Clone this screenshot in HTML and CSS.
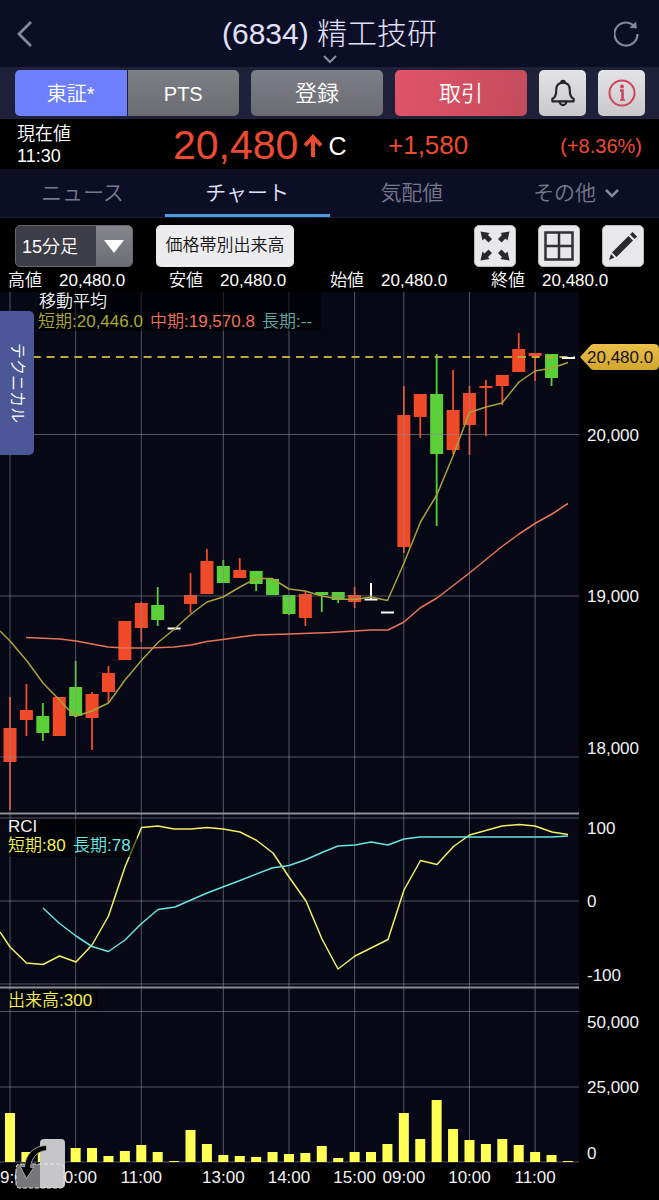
FILE: index.html
```html
<!DOCTYPE html>
<html lang="ja">
<head>
<meta charset="utf-8">
<meta name="viewport" content="width=device-width, initial-scale=1">
<title>(6834) 精工技研</title>
<link rel="stylesheet" href="styles.css">
</head>
<body>
<header class="header">
  <button class="icon-button" type="button" aria-label="戻る">
    <svg width="28" height="28" viewBox="0 0 28 28"><path d="M14 2 2 14l12 12" fill="none" stroke="#85879a" stroke-width="2.800"/></svg>
  </button>
  <div class="title-block">
    <h1 class="title">(6834) 精工技研</h1>
    <svg class="title-chevron" width="16" height="10" viewBox="0 0 16 10"><path d="m2 1 6 6 6-6" fill="none" stroke="#8d8fa3" stroke-width="2"/></svg>
  </div>
  <button class="icon-button" type="button" aria-label="更新">
    <svg width="28" height="28" viewBox="2 0 28 28"><path d="M25.500 14a11.500 11.500 0 1 1-4-8.700" fill="none" stroke="#85879a" stroke-width="2.200"/><path d="m24 1.500.8 7-7.300-.8z" fill="#85879a"/></svg>
  </button>
</header>

<div class="actions">
  <div class="segment">
    <button class="segment-item segment-active" type="button">東証*</button>
    <button class="segment-item" type="button">PTS</button>
  </div>
  <button class="action" type="button">登録</button>
  <button class="action action-trade" type="button">取引</button>
  <button class="square" type="button" aria-label="アラート">
    <svg width="26" height="28" viewBox="0 0 28 30" fill="none" stroke="#242428" stroke-width="2.300" stroke-linejoin="round"><path d="M14 4c-5 0-7.300 3.500-7.300 8 0 6-1.600 8.300-4.200 9.200V24h23v-2.800c-2.600-.9-4.200-3.200-4.200-9.200 0-4.500-2.300-8-7.300-8z"/><path d="M12 4a2 2 0 0 1 4 0M10.500 24.500a3.500 3.500 0 0 0 7 0"/></svg>
  </button>
  <button class="square" type="button" aria-label="情報">
    <svg width="28" height="28" viewBox="0 0 28 28" fill="none" stroke="#cf4359"><circle cx="14" cy="14" r="12.500" stroke-width="2"/><circle cx="14" cy="7.500" r="2" fill="#cf4359" stroke="none"/><path d="M12 11.500h2.500v9.500" stroke-width="2.600"/><path d="M12 21h5" stroke-width="1.600"/></svg>
  </button>
</div>

<section class="quote">
  <div class="quote-label"><span>現在値</span><time>11:30</time></div>
  <div class="quote-price">
    <strong class="price">20,480</strong>
    <svg width="20" height="24" viewBox="0 0 20 24"><path d="M10 23V4M2 11.500 10 3l8 8.500" fill="none" stroke="#ed4a32" stroke-width="4"/></svg>
    <span class="close-mark">C</span>
  </div>
  <div class="quote-change"><span class="change">+1,580</span><span class="rate">(+8.36%)</span></div>
</section>

<nav class="tabs">
  <a class="tab" href="#news">ニュース</a>
  <a class="tab tab-active" href="#chart" aria-current="page">チャート</a>
  <a class="tab" href="#board">気配値</a>
  <a class="tab" href="#other">その他
    <svg width="16" height="10" viewBox="0 0 16 10"><path d="m2 2 6 6 6-6" fill="none" stroke="#85879a" stroke-width="2.500"/></svg>
  </a>
</nav>

<div class="toolbar">
  <div class="select-box">
    <select class="select" aria-label="足種"><option>15分足</option></select>
    <span class="select-arrow"><svg width="20" height="13" viewBox="0 0 20 13"><path d="M0 0h20L10 13z" fill="#fff"/></svg></span>
  </div>
  <button class="volume-button" type="button">価格帯別出来高</button>
  <div class="tools">
    <button class="tool" type="button" aria-label="全画面">
      <svg width="30" height="30" viewBox="0 0 30 30" fill="#28292d"><g id="arrow"><path d="M.5.5 9.500 2 8 4l4 4-3.500 3.500-4-4-2 2z"/></g><use href="#arrow" transform="translate(30 0) scale(-1 1)"/><use href="#arrow" transform="translate(0 30) scale(1 -1)"/><use href="#arrow" transform="translate(30 30) scale(-1 -1)"/></svg>
    </button>
    <button class="tool" type="button" aria-label="分割表示">
      <svg width="30" height="30" viewBox="0 0 30 30" fill="none" stroke="#303136" stroke-width="2.500"><path d="M1.500 1.500h27v27h-27zM15 1.500v27M1.500 15h27"/></svg>
    </button>
    <button class="tool" type="button" aria-label="描画">
      <svg width="30" height="30" viewBox="0 0 30 30" fill="#28292d"><path d="m20.500 5 4.500 4.500L8.500 26 4 21.500zM22 3.500 24.500 1 29 5.500 26.500 8zM3 23l3.500 3.500L1 29z"/></svg>
    </button>
  </div>
</div>

<dl class="ohlc">
  <div class="ohlc-item"><dt>高値</dt><dd>20,480.0</dd></div>
  <div class="ohlc-item"><dt>安値</dt><dd>20,480.0</dd></div>
  <div class="ohlc-item"><dt>始値</dt><dd>20,480.0</dd></div>
  <div class="ohlc-item"><dt>終値</dt><dd>20,480.0</dd></div>
</dl>

<main class="chart-area">
  <svg class="chart" viewBox="0 292 659 908" role="img" aria-label="15分足チャート">
    <defs>
      <linearGradient id="tag" x2="0" y2="1"><stop stop-color="#e9c04a"/><stop offset="1" stop-color="#d3a52f"/></linearGradient>
    </defs>
    <rect class="plot" x="0" y="292" width="579" height="870"/>
    <g id="candles"></g>
    <g id="grid"></g>
    <g id="volumes"></g>
    <g id="lines"></g>
    <path class="divider" d="M0 813.500h579M0 987.500h579"/>
    <path class="current" d="M5 357H575"/>
    <path class="flat" d="M562 358h13"/>
    <g class="shade">
      <rect x="38" y="292" width="283" height="39"/>
      <rect x="8" y="819" width="129" height="38"/>
      <rect x="8" y="990" width="90" height="19"/>
    </g>
    <g class="label">
      <text x="39" y="307">移動平均</text>
      <text class="short-ma" x="38" y="327">短期:20,446.0</text>
      <text class="mid-ma" x="150" y="327">中期:19,570.8</text>
      <text class="long-ma" x="262" y="327">長期:--</text>
      <text x="8" y="832">RCI</text>
      <text class="yellow" x="8" y="851">短期:80</text>
      <text class="cyan" x="73" y="851">長期:78</text>
      <text class="yellow" x="8" y="1006">出来高:300</text>
      <text x="587" y="441">20,000</text>
      <text x="587" y="602">19,000</text>
      <text x="587" y="754">18,000</text>
      <text x="587" y="834">100</text>
      <text x="587" y="907">0</text>
      <text x="587" y="981">-100</text>
      <text x="587" y="1028">50,000</text>
      <text x="587" y="1093">25,000</text>
      <text x="587" y="1159">0</text>
      <text x="0" y="1183">9:00</text>
    </g>
    <g class="label hours" id="hours"></g>
    <path d="M580 357 591 345q1-1 3-1h60q5 0 5 5v16q0 5-5 5h-60q-2 0-3-1z" fill="url(#tag)"/>
    <text class="label tag-text" x="587" y="363">20,480.0</text>
  </svg>
  <button class="technical" type="button">テクニカル</button>
  <button class="rotate" type="button" aria-label="画面回転">
    <svg width="50" height="50" viewBox="0 0 50 50">
      <path d="M5 25h20v24H5q-4 0-4-4V29q0-4 4-4z" fill="#77777a"/>
      <path d="M25 4q0-4 4-4h17q4 0 4 4v41q0 4-4 4H25z" fill="#c6c6c8"/>
      <path d="M5 25h41q3 0 3 4v16q0 4-4 4H5q-4 0-4-4V29q0-4 4-4z" fill="none" stroke="#e4e4e6" stroke-dasharray="4 2"/>
      <path d="M31.500 6.500v5C23 12 16.500 18 15.500 28.500l3.500-.5-7.500 11.500L5 27l4.500 1C10.500 15 19 6.500 31.500 6.500z" fill="#000" stroke="#bcbcbe" stroke-width=".8"/>
    </svg>
  </button>
</main>
<script src="chart.js"></script>
</body>
</html>
```

FILE: styles.css
```css
* {
  box-sizing: border-box;
}

body {
  margin: 0;
  background: #000;
  color: #fff;
  font-family: "Liberation Sans", "Noto Sans CJK JP", sans-serif;
  font-weight: 350;
  line-height: 1.2;
}

button,
select {
  margin: 0;
  padding: 0;
  border: 0;
  background: none;
  color: inherit;
  font: inherit;
}

svg {
  display: block;
}

.header {
  display: flex;
  align-items: center;
  justify-content: space-between;
  height: 67px;
  padding: 0 17px;
  background: #0c0e26;
}

.icon-button {
  display: flex;
}

.title-block {
  display: flex;
  flex-direction: column;
  align-items: center;
  padding-top: 10px;
}

.title {
  margin: 0;
  color: #e0e0fa;
  font-size: 30px;
  font-weight: 300;
  line-height: 42px;
}

.actions {
  display: grid;
  grid-template-columns: 224fr 132fr 132fr 47px 47px;
  gap: 12px;
  padding: 3px 14px 3px 15px;
  background: #1f2039;
}

.segment {
  display: grid;
  grid-template-columns: 1fr 1fr;
  gap: 1px;
  overflow: hidden;
  border-radius: 5px;
}

.segment-item {
  padding-top: 2px;
  background: linear-gradient(#7d7e84, #6c6d73);
  font-size: 20px;
}

.segment-active {
  background: #6d80fa;
}

.action {
  height: 46px;
  padding-top: 3px;
  border-radius: 5px;
  background: linear-gradient(#7d7e86, #6c6d73);
  font-size: 22px;
}

.action-trade {
  background: linear-gradient(100deg, #e05568, #c44b5b);
}

.square {
  display: flex;
  align-items: center;
  justify-content: center;
  border-radius: 5px;
  background: linear-gradient(#e3e3e6, #c9c9cc);
}

.quote {
  display: grid;
  grid-template-columns: 156fr 215fr 254fr;
  align-items: center;
  height: 50px;
  padding: 0 17px;
}

.quote-label {
  display: flex;
  flex-direction: column;
  font-size: 18px;
  line-height: 22px;
}

.quote-price {
  display: flex;
  align-items: center;
  gap: 5px;
  padding-top: 2px;
}

.price {
  color: #ed4a32;
  font-size: 41px;
  font-weight: 300;
}

.close-mark {
  font-size: 25px;
}

.quote-change {
  display: flex;
  align-items: center;
  justify-content: space-between;
  padding-top: 2px;
  color: #ed4a32;
}

.change {
  font-size: 26px;
}

.rate {
  font-size: 20px;
}

.tabs {
  display: grid;
  grid-template-columns: repeat(4, 1fr);
  height: 49px;
  border-bottom: 1px solid #1e2033;
  background: #0c0e26;
}

.tab {
  display: flex;
  align-items: center;
  justify-content: center;
  gap: 8px;
  padding-top: 3px;
  border-bottom: 3px solid transparent;
  color: #77798b;
  font-size: 21px;
  text-decoration: none;
}

.tab-active {
  border-bottom-color: #4c9adf;
  color: #e0e0fa;
}

.toolbar {
  display: flex;
  align-items: center;
  gap: 23px;
  padding: 7px 15px 2px;
}

.select-box {
  display: grid;
  grid-template-columns: 81fr 37fr;
  width: 118px;
  height: 42px;
  overflow: hidden;
  border: 1px solid #66676d;
  border-radius: 5px;
  background: #3d3d47;
}

.select {
  grid-area: 1 / 1 / 2 / 3;
  padding: 3px 0 0 6px;
  appearance: none;
  font-size: 18px;
}

.select-arrow {
  display: flex;
  grid-area: 1 / 2 / 2 / 3;
  align-items: center;
  justify-content: center;
  background: linear-gradient(#85868b, #6c6d73);
  pointer-events: none;
}

.volume-button {
  width: 138px;
  height: 42px;
  border-radius: 5px;
  background: #ececee;
  color: #111;
  font-size: 17px;
  white-space: nowrap;
}

.tools {
  display: flex;
  gap: 22px;
  margin-left: auto;
}

.tool {
  display: flex;
  align-items: center;
  justify-content: center;
  width: 42px;
  height: 42px;
  border: 1px solid #bbbbc0;
  border-radius: 5px;
  background: #e8e8eb;
}

.ohlc {
  display: grid;
  grid-template-columns: repeat(4, 1fr);
  margin: 0;
  padding: 0 7px 0 8px;
  font-size: 17px;
  line-height: 23px;
}

.ohlc-item {
  display: flex;
  gap: 17px;
}

.ohlc dd {
  margin: 0;
}

.chart-area {
  position: relative;
}

.chart {
  width: 100%;
  height: auto;
}

.technical {
  position: absolute;
  top: 19px;
  left: 0;
  width: 34px;
  height: 144px;
  border-radius: 0 5px 5px 0;
  background: #4b5797;
  font-size: 16px;
  text-orientation: sideways;
  writing-mode: vertical-rl;
}

.rotate {
  position: absolute;
  bottom: 11px;
  left: 15px;
}

.plot {
  fill: #060815;
}

.grid-line {
  stroke: #8a8a96;
  stroke-opacity: 0.6;
}

.divider {
  stroke: #8e8e96;
  stroke-width: 2;
}

.current {
  stroke: #c0a83c;
  stroke-dasharray: 8 5.86;
  stroke-width: 2;
}

.up {
  fill: #f04a28;
}

.down {
  fill: #5bcf38;
}

.flat {
  fill: #fff;
  stroke: #fff;
  stroke-width: 2;
}

.volume {
  fill: #ffff54;
}

.line {
  fill: none;
  stroke-linejoin: round;
  stroke-width: 1.5;
}

.line-short {
  stroke: #aaa23a;
}

.line-mid {
  stroke: #e87458;
}

.line-yellow {
  stroke: #f3ef62;
}

.line-cyan {
  stroke: #68e4df;
}

.shade {
  fill: #000;
  fill-opacity: 0.55;
}

.label {
  fill: #f2f2f4;
  font-size: 17px;
}

.hours {
  text-anchor: middle;
}

.short-ma {
  fill: #aaa832;
}

.mid-ma {
  fill: #f0705a;
}

.long-ma {
  fill: #5fa9a2;
}

.yellow {
  fill: #f3ef55;
}

.cyan {
  fill: #6ce8e4;
}

.tag-text {
  fill: #15120a;
}
```

FILE: chart.js
```js
const NS = "http://www.w3.org/2000/svg";

function add(parent, name, attributes, text) {
  const node = document.createElementNS(NS, name);
  for (const key in attributes) node.setAttribute(key, attributes[key]);
  if (text) node.textContent = text;
  document.getElementById(parent).appendChild(node);
}

const slotX = (i) => 10 + i * 16.41;

// kind, body top, body bottom, wick top, wick bottom
const candles = [
  ["up", 728, 762, 697, 810], ["up", 710, 720, 684, 736], ["down", 716, 733, 703, 741],
  ["up", 697, 736, 697, 736], ["down", 687, 716, 661, 717], ["up", 694, 718, 692, 750],
  ["up", 673, 692, 666, 702], ["up", 621, 660, 621, 660], ["up", 603, 628, 602, 642],
  ["down", 605, 620, 587, 626], ["flat", 628, 629, 628, 629], ["up", 595, 604, 573, 613],
  ["up", 561, 594, 549, 594], ["down", 566, 583, 560, 583], ["up", 570, 578, 558, 578],
  ["down", 571, 584, 571, 591], ["down", 579, 595, 579, 595], ["down", 595, 614, 595, 615],
  ["up", 594, 618, 591, 626], ["down", 592, 595, 592, 612], ["down", 592, 600, 592, 603],
  ["up", 595, 602, 587, 608], ["flat", 599, 600, 583, 600], ["flat", 612, 613, 612, 613],
  ["up", 415, 547, 386, 553], ["up", 394, 417, 394, 438], ["down", 394, 454, 354, 526],
  ["up", 410, 450, 370, 454], ["up", 393, 425, 386, 455], ["up", 386, 388, 380, 436],
  ["up", 375, 386, 375, 405], ["up", 349, 372, 333, 372], ["up", 353, 356, 353, 381],
  ["down", 354, 378, 354, 386],
];

candles.forEach(([kind, top, bottom, high, low], i) => {
  const x = slotX(i);
  if (kind === "flat") {
    add("candles", "path", { class: "flat", d: `M${x - 6.5} ${top + 0.5}h13M${x} ${high}V${low}` });
    return;
  }
  add("candles", "rect", { class: kind, x: x - 0.9, y: high, width: 1.8, height: low - high });
  add("candles", "rect", { class: kind, x: x - 6.5, y: top, width: 13, height: bottom - top });
});

const volumeTops = [
  1113, 1152, 1152, 1155, 1148, 1148, 1156, 1151, 1145, 1152, 1161, 1130, 1144, 1155, 1156, 1157, 1152, 1154,
  1153, 1146, 1158, 1152, 1152, 1144, 1113, 1139, 1100, 1129, 1140, 1144, 1139, 1145, 1152, 1155, 1161,
];
volumeTops.forEach((y, i) => add("volumes", "rect", { class: "volume", x: slotX(i) - 5, y, width: 10, height: 1162 - y }));

const hours = { 0: "", 4: "10:00", 8: "11:00", 13: "13:00", 17: "14:00", 21: "15:00", 24: "09:00", 28: "10:00", 32: "11:00" };
for (const i in hours) {
  const x = slotX(Number(i));
  add("grid", "path", { class: "grid-line", d: `M${x} 292V1162` });
  if (hours[i]) add("hours", "text", { x, y: 1183 }, hours[i]);
}
[434.5, 596, 757, 818, 901, 984, 1011.5, 1087, 1162].forEach((y) => add("grid", "path", { class: "grid-line", d: `M0 ${y}H579` }));

const lines = {
  "line-mid": "26,637.5 60,639 76,641 92,644 108,647 125,648 150,648 174,647 191,645 207,641.5 223,639.5 240,637 256,635 289,634 330,632.5 355,631 371,630 388,630 404,622 420,608 437,598 469.5,573 502,546.5 519,534 535,523.5 552,514 568,503.5",
  "line-short": "0,631 10,641 27,661 43,683 59.5,700 75,716.5 92,711 108.5,703 125,680 141,661 158,642.5 174.5,629 191,614 207,602 223,597 240,587 256,578.5 272,578.5 289,589 305,591 322,596 338,599 355,599.5 371,597 387.5,600.5 404,563 420.5,522 437,494.5 453,456 469.5,412.5 486,407 502,403 519,382 535,371 552,368 568,362.5",
  "line-yellow": "0,932 10,947 26.5,963 43,964.5 59.5,956 76,962 92,945 108.5,916 125,867 141.5,827.5 158,826 174,829 191,829 207,827.5 223,829 240,832 256,840 273,853 289,877 306,901 322,939 338,969 355,956 388,939.5 404,890 420.5,860.5 437,864.5 453.5,846.5 469.5,835 502,826 519,824.5 535,826 552,832 568,834.5",
  "line-cyan": "43,908 59,923 76,936 92,946.5 108.5,951.5 125,940 141,924 158,909.5 175,907 207,893 240,880.5 272,868 289,865.5 305,860 322,852.5 338,846 355,845 371,842 388,845 404,839 420,837 552,837 568,836",
};
for (const name in lines) add("lines", "polyline", { class: `line ${name}`, points: lines[name] });
```
